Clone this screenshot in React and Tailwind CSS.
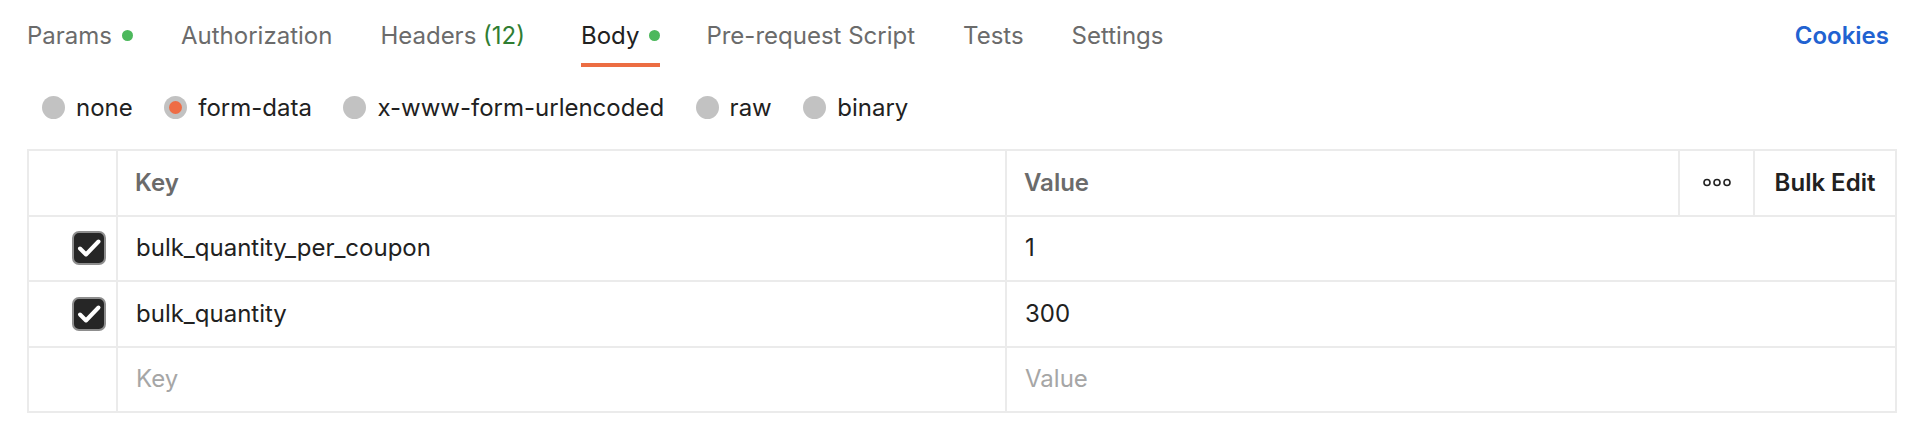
import React from "react";

const tabs = [
  { label: "Params", dot: true },
  { label: "Authorization" },
  { label: "Headers", count: "(12)" },
  { label: "Body", dot: true, active: true, extra: "ml-[8px]" },
  { label: "Pre-request Script", extra: "-ml-[2px]" },
  { label: "Tests" },
  { label: "Settings" },
];

const bodyTypes = [
  { label: "none" },
  { label: "form-data", selected: true },
  { label: "x-www-form-urlencoded" },
  { label: "raw" },
  { label: "binary" },
];

const rows = [
  { key: "bulk_quantity_per_coupon", value: "1" },
  { key: "bulk_quantity", value: "300" },
];

function Tab({ label, dot, count, active, extra = "" }) {
  return (
    <div className={`flex flex-col ${extra}`}>
      <div className="flex items-center gap-[10px] h-[29px]">
        <span
          className={`text-[24px] leading-[29px] ${
            active ? "text-[#212121]" : "text-[#6b6b6b]"
          }`}
        >
          {label}
          {count && <span className="text-[#2f7d32]"> {count}</span>}
        </span>
        {dot && <span className="w-[11px] h-[11px] rounded-full bg-[#4cb85c]" />}
      </div>
      <div className={`mt-[13px] h-[4px] ${active ? "bg-[#ec6d42]" : "bg-transparent"}`} />
    </div>
  );
}

function Radio({ label, selected }) {
  return (
    <div className="flex items-center gap-[11px]">
      <span className="w-[23px] h-[23px] rounded-full bg-[#c2c2c2] flex items-center justify-center">
        {selected && <span className="w-[13px] h-[13px] rounded-full bg-[#ee6c45]" />}
      </span>
      <span className="text-[24px] leading-[29px] text-[#212121]">{label}</span>
    </div>
  );
}

function Checkbox() {
  return (
    <span className="w-[34px] h-[34px] rounded-[7px] bg-[#262626] border-2 border-[#8e8e8e] flex items-center justify-center">
      <svg width="30" height="30" viewBox="0 0 30 30" fill="none">
        <path
          d="M6 15.5 L12 21.5 L24.5 8.5"
          stroke="white"
          strokeWidth="4"
          strokeLinecap="round"
          strokeLinejoin="round"
        />
      </svg>
    </span>
  );
}

function MoreDots() {
  return (
    <svg width="28" height="9" viewBox="0 0 28 9" fill="none">
      <circle cx="4" cy="4.5" r="3" stroke="#212121" strokeWidth="1.6" />
      <circle cx="14" cy="4.5" r="3" stroke="#212121" strokeWidth="1.6" />
      <circle cx="24" cy="4.5" r="3" stroke="#212121" strokeWidth="1.6" />
    </svg>
  );
}

export default function App() {
  return (
    <div className="w-[1922px] h-[434px] bg-white pl-[27px] pr-[25px] font-['Inter',sans-serif] overflow-hidden">
      {/* request tabs */}
      <div className="flex items-start justify-between pt-[21px]">
        <div className="flex items-start gap-[48px]">
          {tabs.map((t) => (
            <Tab key={t.label} {...t} />
          ))}
        </div>
        <span className="text-[24px] leading-[29px] font-semibold text-[#2162d1] mr-[8px]">
          Cookies
        </span>
      </div>

      {/* body type */}
      <div className="flex items-center gap-[31.5px] mt-[25px] pl-[15px] h-[30px]">
        {bodyTypes.map((b) => (
          <Radio key={b.label} {...b} />
        ))}
      </div>

      {/* key / value table */}
      <div className="mt-[27px] border-2 border-[#ebebeb] border-b-0 text-[24px]">
        <div className="flex h-[65.5px] border-b-2 border-[#ebebeb]">
          <div className="w-[89px] border-r-2 border-[#ebebeb]" />
          <div className="w-[889px] border-r-2 border-[#ebebeb] flex items-center pl-[17px] font-semibold text-[#6b6b6b]">
            Key
          </div>
          <div className="w-[673px] border-r-2 border-[#ebebeb] flex items-center pl-[17px] font-semibold text-[#6b6b6b]">
            Value
          </div>
          <div className="w-[75px] border-r-2 border-[#ebebeb] flex items-center justify-center">
            <MoreDots />
          </div>
          <div className="flex-1 flex items-center justify-center font-semibold text-[#212121]">
            Bulk Edit
          </div>
        </div>
        {rows.map((r) => (
          <div key={r.key} className="flex h-[65.5px] border-b-2 border-[#ebebeb]">
            <div className="w-[89px] border-r-2 border-[#ebebeb] flex items-center justify-end pr-[10px]">
              <Checkbox />
            </div>
            <div className="w-[889px] border-r-2 border-[#ebebeb] flex items-center pl-[18px] text-[#212121]">
              {r.key}
            </div>
            <div className="flex-1 flex items-center pl-[18px] text-[#212121]">
              {r.value}
            </div>
          </div>
        ))}
        <div className="flex h-[65.5px] border-b-2 border-[#ebebeb]">
          <div className="w-[89px] border-r-2 border-[#ebebeb]" />
          <div className="w-[889px] border-r-2 border-[#ebebeb] flex items-center pl-[18px] text-[#a6a6a6]">
            Key
          </div>
          <div className="flex-1 flex items-center pl-[18px] text-[#a6a6a6]">
            Value
          </div>
        </div>
      </div>
    </div>
  );
}
